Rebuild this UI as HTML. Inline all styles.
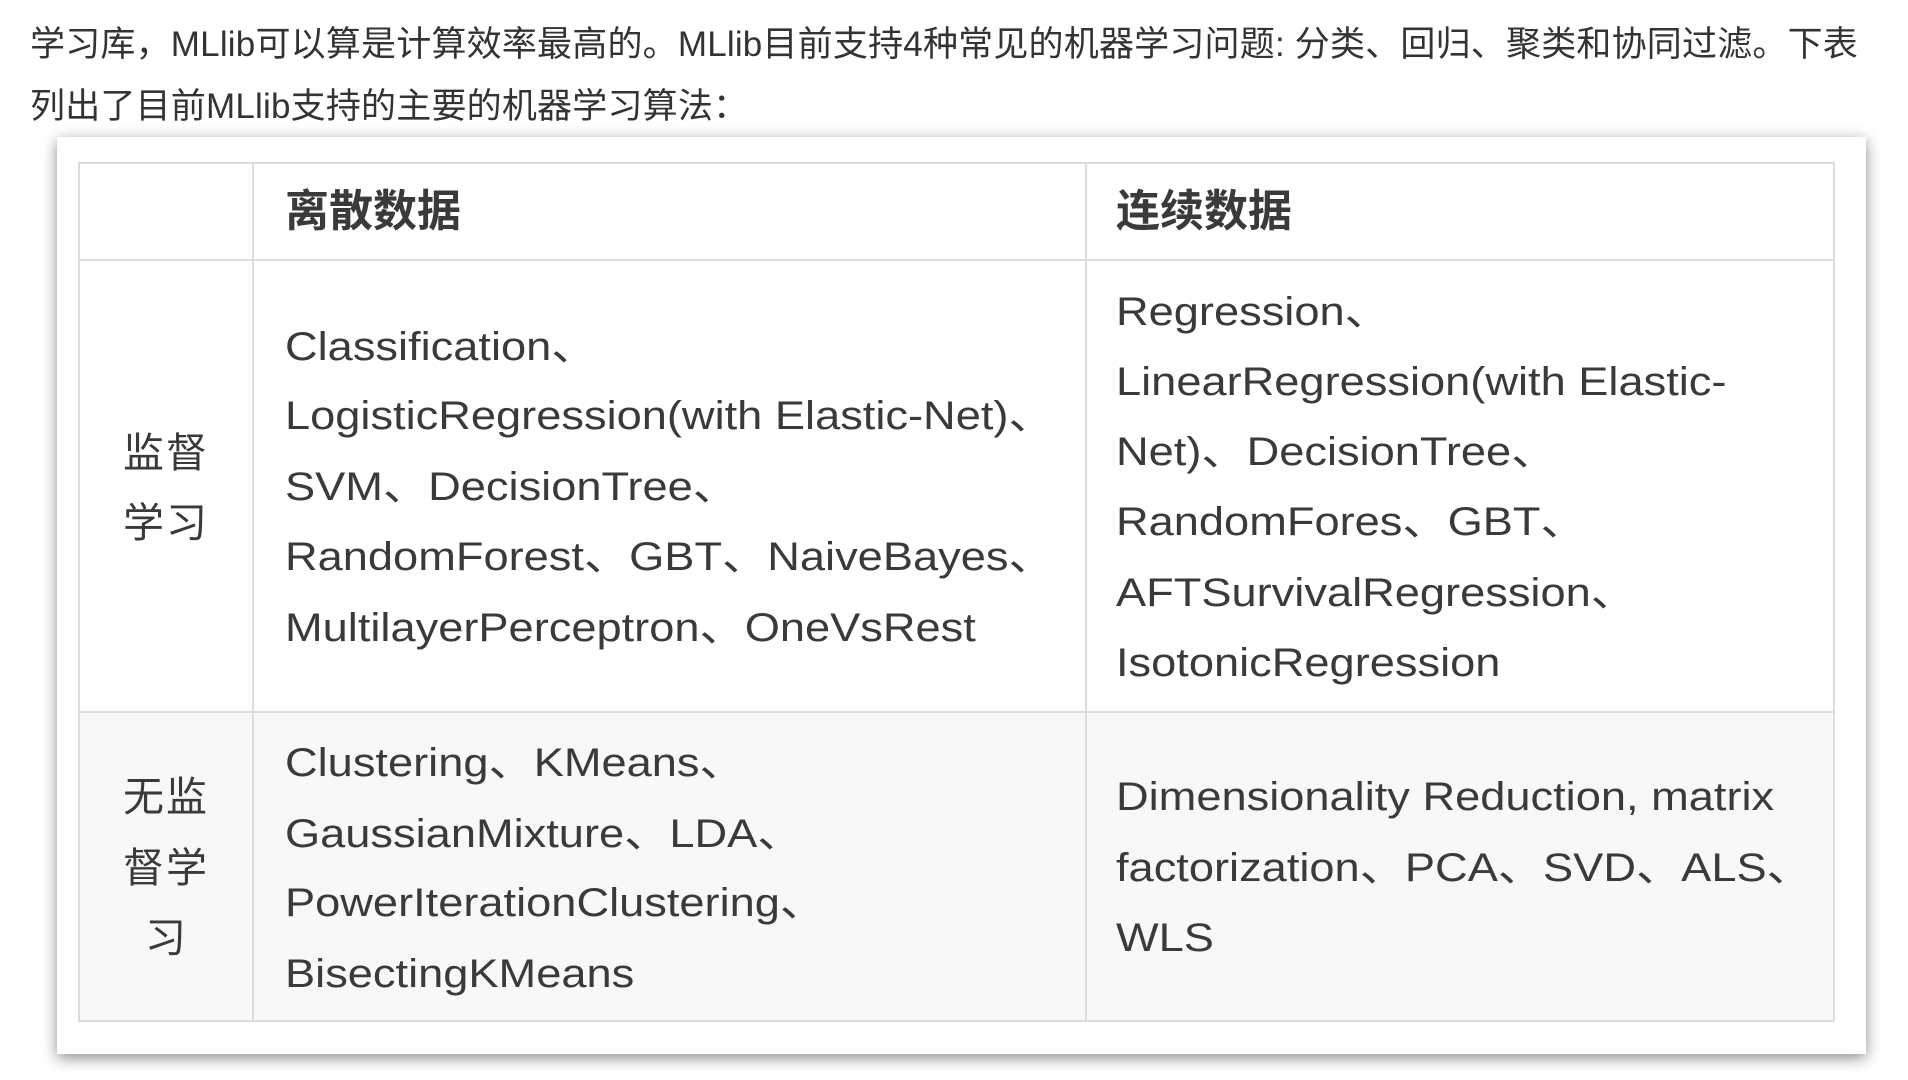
<!DOCTYPE html>
<html><head><meta charset="utf-8"><style>
body{margin:0;width:1908px;height:1080px;background:#fff;position:relative;overflow:hidden;font-family:"Liberation Sans","Noto Sans CJK SC",sans-serif;color:#333}
.p{position:absolute;left:30px;font-size:35px;white-space:nowrap;line-height:40px;letter-spacing:0.2px}
.card{position:absolute;left:57px;top:137px;width:1809px;height:917px;background:#fff;box-shadow:0 4px 14px rgba(0,0,0,.45)}
.t{position:absolute;left:78px;top:162px;width:1757px;height:860px;border:2px solid #ddd;box-sizing:border-box}
.r3{position:absolute;left:78px;top:712px;width:1757px;height:310px;background:#f8f8f8}
.vl{position:absolute;width:2px;background:#ddd;top:162px;height:860px}
.hl{position:absolute;height:2px;background:#ddd;left:78px;width:1757px}
.l{position:absolute;white-space:nowrap;font-size:40px;line-height:70px;color:#3a3a3a;transform:translateY(-35px) scaleX(1.13);transform-origin:left center}
.h{font-weight:bold;font-size:44px;transform:translateY(-35px)}
.c{font-size:41px;transform:translateY(-35px)}
</style></head><body>
<div class="p" style="top:25px">学习库，MLlib可以算是计算效率最高的。MLlib目前支持4种常见的机器学习问题: 分类、回归、聚类和协同过滤。下表</div>
<div class="p" style="top:87px">列出了目前MLlib支持的主要的机器学习算法：</div>
<div class="card"></div>
<div class="r3"></div>
<div class="t"></div>
<div class="vl" style="left:252px"></div>
<div class="vl" style="left:1085px"></div>
<div class="hl" style="top:259px"></div>
<div class="hl" style="top:711px"></div>
<div class="l h" style="left:285px;top:212px">离散数据</div>
<div class="l h" style="left:1116px;top:212px">连续数据</div>
<div class="l c" style="left:123px;top:453px;letter-spacing:2px">监督</div>
<div class="l c" style="left:123px;top:523px;letter-spacing:2px">学习</div>
<div class="l c" style="left:123px;top:797px;letter-spacing:2px">无监</div>
<div class="l c" style="left:123px;top:868px;letter-spacing:2px">督学</div>
<div class="l c" style="left:145px;top:938px">习</div>
<div class="l" style="left:285px;top:347px">Classification、</div>
<div class="l" style="left:285px;top:416px">LogisticRegression(with Elastic-Net)、</div>
<div class="l" style="left:285px;top:487px">SVM、DecisionTree、</div>
<div class="l" style="left:285px;top:557px">RandomForest、GBT、NaiveBayes、</div>
<div class="l" style="left:285px;top:628px">MultilayerPerceptron、OneVsRest</div>
<div class="l" style="left:1116px;top:312px">Regression、</div>
<div class="l" style="left:1116px;top:382px">LinearRegression(with Elastic-</div>
<div class="l" style="left:1116px;top:452px">Net)、DecisionTree、</div>
<div class="l" style="left:1116px;top:522px">RandomFores、GBT、</div>
<div class="l" style="left:1116px;top:593px">AFTSurvivalRegression、</div>
<div class="l" style="left:1116px;top:663px">IsotonicRegression</div>
<div class="l" style="left:285px;top:763px">Clustering、KMeans、</div>
<div class="l" style="left:285px;top:834px">GaussianMixture、LDA、</div>
<div class="l" style="left:285px;top:903px">PowerIterationClustering、</div>
<div class="l" style="left:285px;top:974px">BisectingKMeans</div>
<div class="l" style="left:1116px;top:797px">Dimensionality Reduction, matrix</div>
<div class="l" style="left:1116px;top:868px">factorization、PCA、SVD、ALS、</div>
<div class="l" style="left:1116px;top:938px">WLS</div>
</body></html>
